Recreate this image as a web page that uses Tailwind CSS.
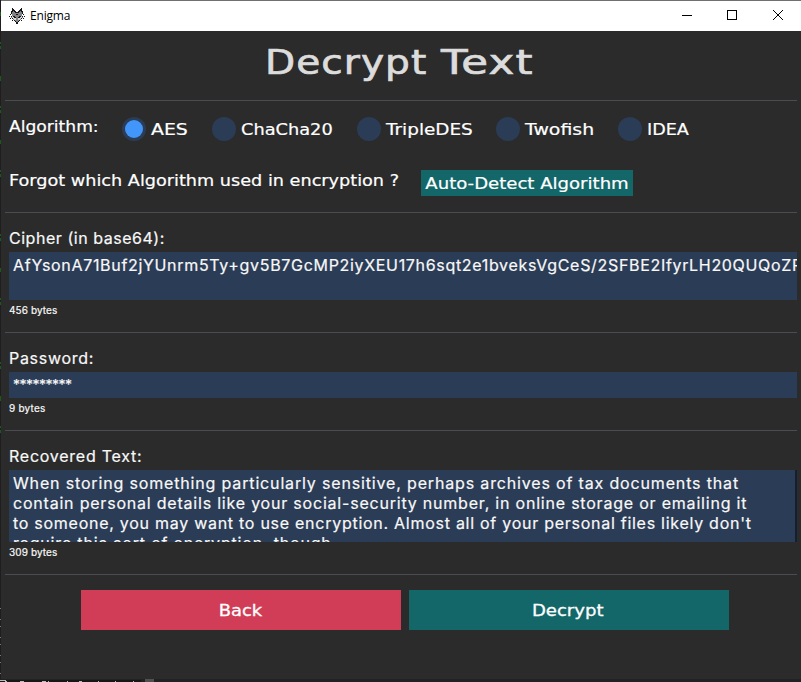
<!DOCTYPE html>
<html lang="en">
<head>
<meta charset="utf-8">
<title>Enigma</title>
<script src="https://cdn.jsdelivr.net/npm/@tailwindcss/browser@4"></script>
</head>
<body class="relative h-[682px] w-[801px] overflow-hidden bg-[#2b2b2b] font-['Inter',sans-serif] text-base font-normal leading-5 whitespace-nowrap text-[#f8f8f8]">
<div class="flex h-full w-full flex-col">
  <!-- Title bar -->
  <header class="flex h-[31px] shrink-0 items-center border-t border-[#707070] bg-white pl-[9px] text-black">
    <svg class="mb-px h-4 w-4" viewBox="0 0 16 16" shape-rendering="crispEdges">
      <path fill="#858585" d="M3 2h1v1h1v1h6V3h1V2h1v6h1v2h-2v2h-2v2H6v-2H4v-2H2V8h1z"/>
      <path fill="#d8d8d8" d="M3 8h2v1h2v3H5v-1H3zM11 8h2v3h-2v1H9V9h2z"/>
      <path fill="#151515" d="M3 0h1v1h1v1h1v1h1v1h2V3h1V2h1V1h1V0h1v4h-1V3h-1v1h-1v1H6V4H5V3H4v1H3zM2 3h1v3H2zM13 3h1v3h-1zM1 6h1v1H1zM14 6h1v1h-1zM0 8h1v1H0zM2 8h1v1H2zM13 8h1v1h-1zM15 8h1v1h-1zM1 10h1v1H1zM3 10h1v1H3zM12 10h1v1h-1zM14 10h1v1h-1zM4 8h2v1h1v1H5V9H4zM12 8h-2v1H9v1h2V9h1zM3 12h1v1H3zM5 12h1v1H5zM10 12h1v1h-1zM12 12h1v1h-1zM6 13h1v1H6zM9 13h1v1H9zM7 14h2v2H7zM7 6h2v1H7z"/>
    </svg>
    <span class="ml-[5px] font-['Open_Sans',sans-serif] text-xs tracking-[-0.2px]">Enigma</span>
    <svg class="ml-auto h-[30px] w-[141px]" viewBox="0 0 141 30" fill="none" stroke="#000" shape-rendering="crispEdges">
      <path d="M22 14.5h10M67.500 9.500h9v9h-9z"/>
      <path d="M113 9l10 10M123 9l-10 10" shape-rendering="auto"/>
    </svg>
  </header>

  <main class="flex grow flex-col pr-1 pl-[5px]">
    <div class="flex h-[70px] items-center justify-center border-b border-[#4b4b53] pr-1 pb-[7px] font-['DejaVu_Sans',sans-serif] text-[#dcdcdc]">
      <h1 class="flex text-[34px] leading-[40px] tracking-[0.9px] [-webkit-text-stroke:0.7px_#dcdcdc]"><span class="w-[176px] origin-left scale-x-[1.15]">Decrypt </span><span class="w-[92px] origin-left scale-x-[1.28]">Text</span></h1>
    </div>

    <section class="h-[112px] border-b border-[#4b4b53] pl-1 font-['DejaVu_Sans',sans-serif] text-white [-webkit-text-stroke:0.2px_white]">
      <div class="flex pt-4">
        <div class="w-[113px]"><span class="inline-block origin-left scale-x-[1.07]">Algorithm:</span></div>
        <div class="flex h-6 w-[90px] items-center"><i class="mr-[5px] flex size-6 shrink-0 items-center justify-center rounded-full bg-[#2b3c56]"><b class="size-[18px] rounded-full bg-[#4296fa]"></b></i><span class="origin-left scale-x-[1.18] pt-0.5">AES</span></div>
        <div class="flex h-6 w-[145px] items-center"><i class="mr-[5px] size-6 shrink-0 rounded-full bg-[#2b3c56]"></i><span class="origin-left scale-x-[1.11] pt-0.5">ChaCha20</span></div>
        <div class="flex h-6 w-[139px] items-center"><i class="mr-[5px] size-6 shrink-0 rounded-full bg-[#2b3c56]"></i><span class="origin-left scale-x-[1.15] pt-0.5">TripleDES</span></div>
        <div class="flex h-6 w-[122px] items-center"><i class="mr-[5px] size-6 shrink-0 rounded-full bg-[#2b3c56]"></i><span class="origin-left scale-x-[1.18] pt-0.5">Twofish</span></div>
        <div class="flex h-6 items-center"><i class="mr-[5px] size-6 shrink-0 rounded-full bg-[#2b3c56]"></i><span class="origin-left scale-x-[1.1] pt-0.5">IDEA</span></div>
      </div>
      <div class="mt-[29px] flex">
        <div class="w-[412px] pt-px"><span class="inline-block origin-left scale-x-[1.103]">Forgot which Algorithm used in encryption ?</span></div>
        <button class="flex h-[26px] w-[212px] items-center justify-center bg-[#136769] pt-0.5"><span class="scale-x-[1.13]">Auto-Detect Algorithm</span></button>
      </div>
    </section>

    <section class="h-[120px] border-b border-[#4b4b53] pt-[15px] pl-1 [-webkit-text-stroke:0.2px_#f8f8f8]">
      <div class="tracking-[0.53px]">Cipher (in base64):</div>
      <div class="mt-1 h-12 overflow-hidden bg-[#2b3c56] pt-[3px] pl-1 tracking-[0.68px]">AfYsonA71Buf2jYUnrm5Ty+gv5B7GcMP2iyXEU17h6sqt2e1bveksVgCeS/2SFBE2IfyrLH20QUQoZR</div>
      <div class="text-[10px] tracking-[0.1px]">456 bytes</div>
    </section>

    <section class="h-[98px] border-b border-[#4b4b53] pt-[15px] pl-1 [-webkit-text-stroke:0.2px_#f8f8f8]">
      <div class="tracking-[0.7px]">Password:</div>
      <div class="mt-1 h-[26px] bg-[#2b3c56] pt-[3px] pl-1 text-sm tracking-[-0.5px]">*********</div>
      <div class="text-[10px] tracking-[0.2px]">9 bytes</div>
    </section>

    <section class="h-[144px] border-b border-[#4b4b53] pt-[15px] pl-1 [-webkit-text-stroke:0.2px_#f8f8f8]">
      <div class="tracking-[0.75px]">Recovered Text:</div>
      <div class="mt-1 h-[72px] overflow-hidden border-r-2 border-[#141f33] bg-[#2b3c56] pt-[3px] pl-1">
        <div class="tracking-[0.84px]">When storing something particularly sensitive, perhaps archives of tax documents that</div>
        <div class="tracking-[0.79px]">contain personal details like your social-security number, in online storage or emailing it</div>
        <div class="tracking-[0.73px]">to someone, you may want to use encryption. Almost all of your personal files likely don't</div>
        <div class="tracking-[0.82px]">require this sort of encryption, though.</div>
      </div>
      <div class="text-[10px] tracking-[0.1px]">309 bytes</div>
    </section>

    <div class="flex gap-2 pt-[15px] pl-[76px] font-['DejaVu_Sans',sans-serif] text-white [-webkit-text-stroke:0.3px_white]">
      <button class="flex h-10 w-80 items-center justify-center bg-[#d13d57] pt-0.5 pr-0.5"><span class="scale-x-[1.12]">Back</span></button>
      <button class="flex h-10 w-80 items-center justify-center bg-[#136769] pt-0.5 pr-0.5"><span class="scale-x-[1.13]">Decrypt</span></button>
    </div>
  </main>
</div>

<!-- Slivers of the windows behind -->
<svg class="absolute top-0 left-0 h-[682px] w-px" viewBox="0 0 1 682" shape-rendering="crispEdges">
  <path fill="#1e1e1e" d="M0 0h1v682H0z"/>
  <path fill="#1c5a1c" d="M0 12h1v4H0zM0 42h1v2H0zM0 46h1v3H0zM0 76h1v5H0zM0 106h1v2H0zM0 110h1v3H0zM0 140h1v4H0zM0 170h1v2H0zM0 174h1v3H0zM0 234h1v2H0zM0 238h1v3H0zM0 268h1v4H0zM0 298h1v2H0zM0 302h1v3H0zM0 362h1v2H0zM0 366h1v3H0zM0 396h1v5H0zM0 426h1v2H0zM0 430h1v3H0z"/>
  <path fill="#777" d="M0 608h1v1H0zM0 619h1v1H0zM0 626h1v1H0zM0 637h1v1H0zM0 644h1v1H0zM0 655h1v1H0zM0 662h1v1H0zM0 673h1v1H0z"/>
</svg>
<svg class="absolute bottom-0 left-0 h-[3px] w-[801px]" viewBox="0 0 801 3" shape-rendering="crispEdges">
  <path fill="#222224" d="M0 0h801v3H0z"/>
  <path fill="#171717" d="M0 1h141v2H0z"/>
  <path fill="#505050" d="M145 0h9v3h-9z"/>
  <path fill="#bbb" d="M0 1h6v1H0zM5 2h2v1H5zM20 2h4v1h-4zM42 2h4v1h-4zM48 2h1v1h-1zM67 2h1v1h-1zM79 2h3v1h-3zM98 2h1v1h-1zM115 2h1v1h-1zM133 2h1v1h-1z"/>
</svg>
</body>
</html>
